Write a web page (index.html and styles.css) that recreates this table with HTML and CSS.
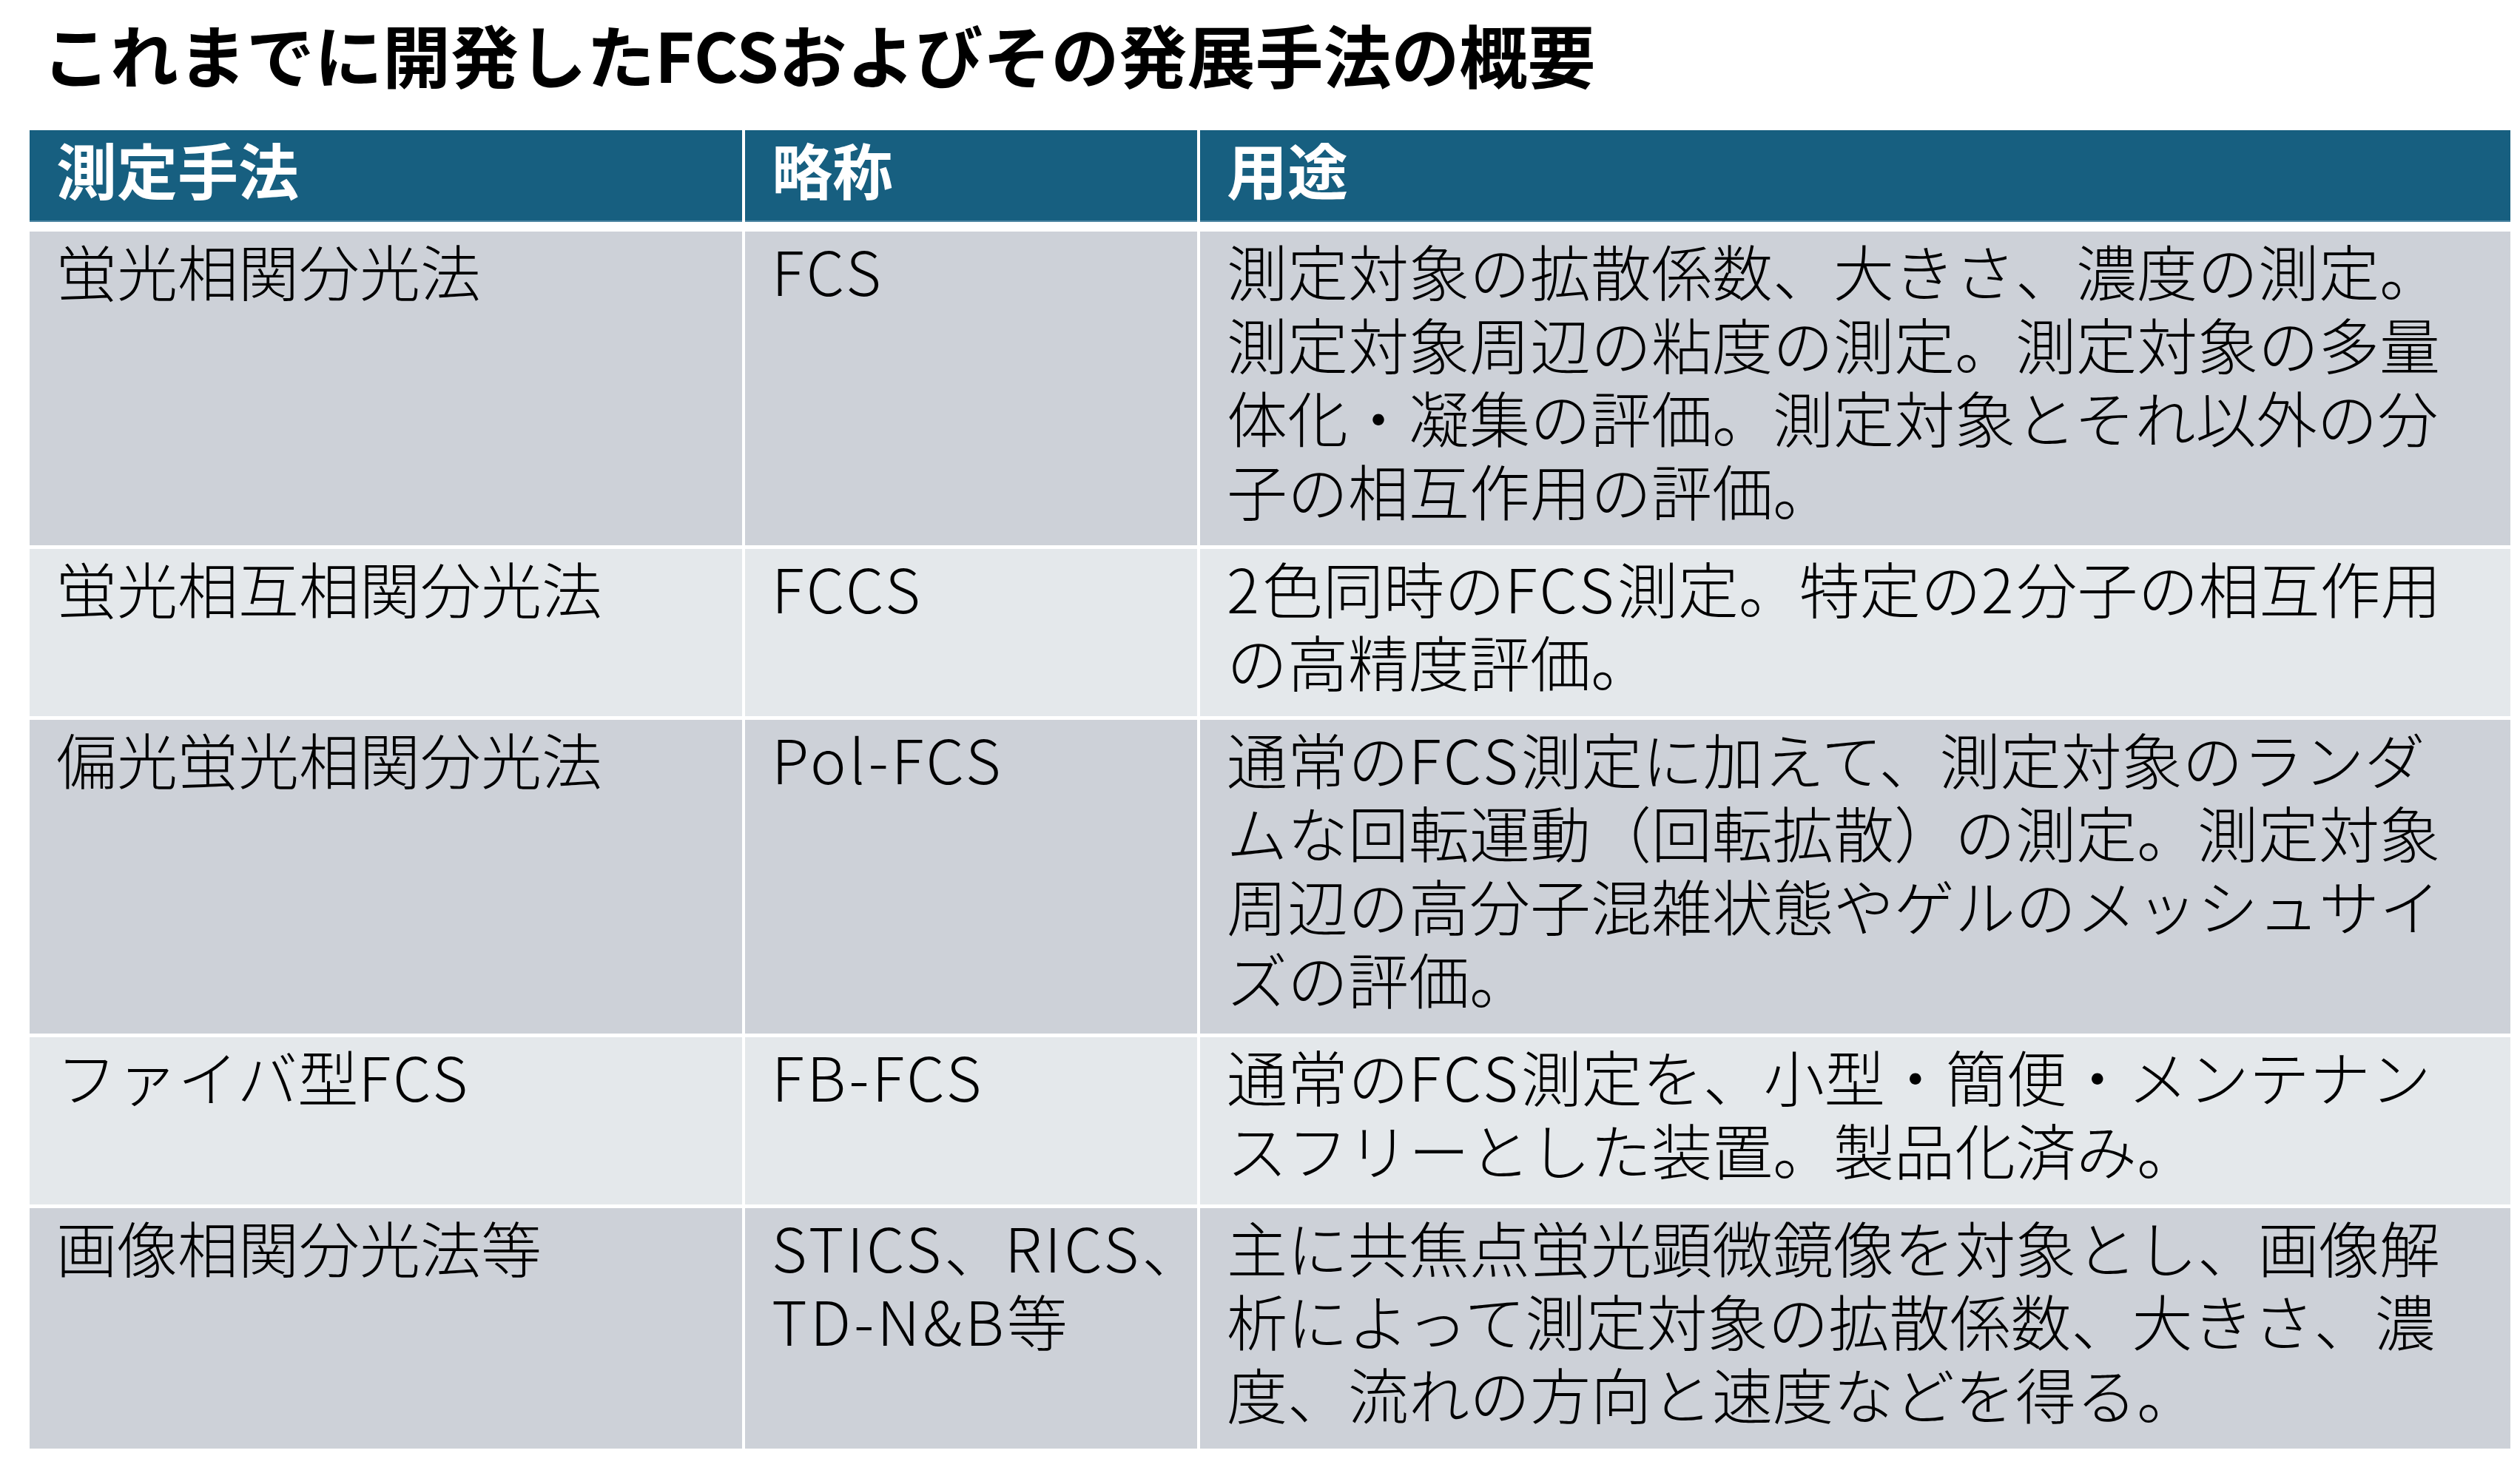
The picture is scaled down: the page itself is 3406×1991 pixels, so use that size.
FILE: index.html
```html
<!DOCTYPE html>
<html lang="ja">
<head>
<meta charset="utf-8">
<title>FCS</title>
<link rel="stylesheet" href="styles.css">
</head>
<body>
<div class="page">
  <h1 class="title">これまでに開発したFCSおよびその発展手法の概要</h1>
  <div class="table">
    <div class="cell head">測定手法</div>
    <div class="cell head">略称</div>
    <div class="cell head">用途</div>

    <div class="cell dark">蛍光相関分光法</div>
    <div class="cell dark"><span class="lat">FCS</span></div>
    <div class="cell dark">測定対象の拡散係数、大きさ、濃度の測定。<br>測定対象周辺の粘度の測定。測定対象の多量<br>体化・凝集の評価。測定対象とそれ以外の分<br>子の相互作用の評価。</div>

    <div class="cell light">蛍光相互相関分光法</div>
    <div class="cell light"><span class="lat">FCCS</span></div>
    <div class="cell light"><span class="lat">2</span>色同時の<span class="lat">FCS</span>測定。特定の<span class="lat">2</span>分子の相互作用<br>の高精度評価。</div>

    <div class="cell dark">偏光蛍光相関分光法</div>
    <div class="cell dark"><span class="lat">Pol-FCS</span></div>
    <div class="cell dark">通常の<span class="lat">FCS</span>測定に加えて、測定対象のランダ<br>ムな回転運動（回転拡散）の測定。測定対象<br>周辺の高分子混雑状態やゲルのメッシュサイ<br>ズの評価。</div>

    <div class="cell light">ファイバ型<span class="lat">FCS</span></div>
    <div class="cell light"><span class="lat">FB-FCS</span></div>
    <div class="cell light">通常の<span class="lat">FCS</span>測定を、小型・簡便・メンテナン<br>スフリーとした装置。製品化済み。</div>

    <div class="cell dark">画像相関分光法等</div>
    <div class="cell dark"><span class="lat">STICS</span>、<span class="lat">RICS</span>、<br><span class="lat">TD-N&amp;B</span>等</div>
    <div class="cell dark">主に共焦点蛍光顕微鏡像を対象とし、画像解<br>析によって測定対象の拡散係数、大きさ、濃<br>度、流れの方向と速度などを得る。</div>
  </div>
</div>
</body>
</html>
```

FILE: styles.css
```css
html, body {
  margin: 0;
  padding: 0;
  background: #ffffff;
}

body {
  font-family: "Noto Sans CJK JP", "Noto Sans", sans-serif;
  color: #000000;
}

.page {
  width: 3406px;
  height: 1991px;
  padding-top: 26px;
  box-sizing: border-box;
  overflow: hidden;
}

.title {
  margin: 0 0 59px 0;
  padding-left: 57px;
  font-size: 92px;
  font-weight: 700;
  line-height: 91px;
  white-space: nowrap;
}

.table {
  margin-left: 40px;
  display: grid;
  grid-template-columns: 963px 611px 1771px;
  column-gap: 4px;
  row-gap: 5px;
}

.cell {
  padding: 2px 30px 26px 36px;
  font-size: 82px;
  font-weight: 300;
  line-height: 99px;
  white-space: nowrap;
}

.lat {
  letter-spacing: 4px;
}

.head {
  background: #175f80;
  color: #ffffff;
  font-weight: 700;
  padding-bottom: 23px;
  margin-bottom: 8px;
  box-shadow: inset 0 -2px 0 #4f87a3;
}

.dark {
  background: #cdd1d8;
}

.light {
  background: #e4e8eb;
}
```
